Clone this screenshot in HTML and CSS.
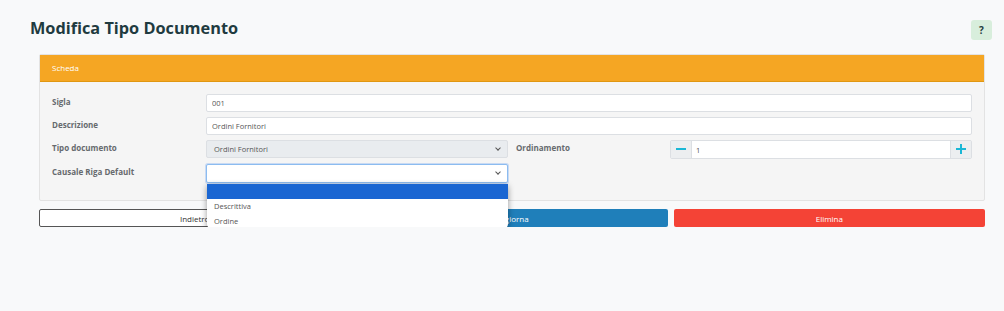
FILE: index.html
```html
<!DOCTYPE html>
<html lang="it">
<head>
  <meta charset="UTF-8">
  <title>Modifica Tipo Documento</title>
  <link rel="stylesheet" href="styles.css">
</head>
<body>
  <!-- Page header -->
  <div class="page-head">
    <h1>Modifica Tipo Documento</h1>
    <button class="help-btn">?</button>
  </div>

  <!-- Card -->
  <div class="card">
    <div class="card-header">Scheda</div>
    <div class="card-body">
      <div class="form-grid">
        <label class="lbl">Sigla</label>
        <div class="field wide"><input class="ctrl" type="text" value="001"></div>

        <label class="lbl">Descrizione</label>
        <div class="field wide"><input class="ctrl" type="text" value="Ordini Fornitori"></div>

        <label class="lbl">Tipo documento</label>
        <div class="field">
          <div class="ctrl select disabled">Ordini Fornitori<span class="chev"></span></div>
        </div>
        <span></span>
        <label class="lbl">Ordinamento</label>
        <div class="field">
          <div class="spinner">
            <span class="spin-btn minus"></span>
            <input class="spin-input" type="text" value="1">
            <span class="spin-btn plus"></span>
          </div>
        </div>

        <label class="lbl">Causale Riga Default</label>
        <div class="field">
          <div class="ctrl select focused"><span class="chev"></span></div>
          <!-- open native list -->
          <ul class="dropdown">
            <li class="active">&nbsp;</li>
            <li>Descrittiva</li>
            <li>Ordine</li>
          </ul>
        </div>
      </div>
    </div>
  </div>

  <div class="actions">
    <button class="btn btn-back">Indietro</button>
    <button class="btn btn-save">Aggiorna</button>
    <button class="btn btn-del">Elimina</button>
  </div>
</body>
</html>
```

FILE: styles.css
```css
body {
  margin: 0;
  padding: 0;
  background: #f8f9fa;
  font-family: 'Open Sans', 'Liberation Sans', sans-serif;
  color: #555;
}

.page-head {
  display: flex;
  justify-content: space-between;
  align-items: flex-start;
  padding: 15px 12px 0 30px;
  height: 39px;
}

.page-head h1 {
  margin: 0;
  font-size: 16.3px;
  font-weight: 700;
  color: #1f3b40;
  line-height: 26px;
}

.help-btn {
  width: 21px;
  height: 20px;
  margin-top: 5px;
  border: none;
  border-radius: 3px;
  background: #d8eedc;
  color: #1f3b40;
  font-family: inherit;
  font-weight: 700;
  font-size: 10px;
  padding: 0;
}

.card {
  margin: 0 19px 0 39px;
  border: 1px solid #e3e3e3;
  border-radius: 2px;
  background: #f5f5f5;
}

.card-header {
  background: #f5a623;
  color: #fff;
  font-size: 8px;
  height: 27px;
  line-height: 26px;
  padding-left: 12px;
  border-bottom: 1px solid #e09712;
  box-sizing: border-box;
}

.card-body {
  padding: 12px 12px 17px 12px;
}

.form-grid {
  display: grid;
  grid-template-columns: 154px 1fr 8px 154px 1fr;
  row-gap: 5px;
}

.lbl {
  font-size: 8px;
  font-weight: 700;
  color: #666a6e;
  padding-top: 2px;
}

.field {
  position: relative;
}

.field.wide {
  grid-column: 2 / -1;
}

.ctrl {
  display: block;
  width: 100%;
  height: 18px;
  box-sizing: border-box;
  border: 1px solid #dcdfe3;
  border-radius: 2px;
  background: #fff;
  padding: 0 5px;
  font-family: inherit;
  font-size: 7.5px;
  color: #555;
  line-height: 16px;
}

.select {
  position: relative;
}

.select.disabled {
  background: #e9ecef;
  padding-left: 7px;
}

.select.focused {
  height: 19px;
  border-color: #8cbcf0;
  box-shadow: 0 0 0 1px rgba(120, 170, 240, 0.35);
}

.chev {
  position: absolute;
  right: 7px;
  top: 5px;
  width: 3px;
  height: 3px;
  border-right: 1.2px solid #555;
  border-bottom: 1.2px solid #555;
  transform: rotate(45deg);
}

.spinner {
  display: flex;
  height: 19px;
  border: 1px solid #dcdfe3;
  border-radius: 2px;
  box-sizing: border-box;
  background: #fff;
}

.spin-btn {
  width: 20px;
  background: #eceef0;
  position: relative;
}

.minus {
  border-right: 1px solid #dcdfe3;
}

.plus {
  border-left: 1px solid #dcdfe3;
}

.spin-btn::before,
.plus::after {
  content: "";
  position: absolute;
  left: 5px;
  top: 7px;
  width: 10px;
  height: 2px;
  background: #1ab7d6;
}

.plus::after {
  left: 9px;
  top: 3px;
  width: 2px;
  height: 10px;
}

.spin-input {
  flex: 1;
  border: none;
  padding: 0 4px;
  font-family: inherit;
  font-size: 7.5px;
  color: #555;
  outline: none;
  min-width: 0;
}

.dropdown {
  position: absolute;
  left: 1px;
  right: 0;
  top: 20px;
  margin: 0;
  padding: 0;
  list-style: none;
  background: #fff;
  border-radius: 0 0 5px 5px;
  box-shadow: 0 2px 6px rgba(0, 0, 0, 0.4);
  z-index: 10;
}

.dropdown li {
  font-size: 7.5px;
  line-height: 15px;
  padding-left: 7px;
  color: #555;
}

.dropdown li.active {
  background: #1a66d2;
  line-height: 15px;
}

.actions {
  display: grid;
  grid-template-columns: 1fr 1fr 1fr;
  gap: 6px;
  margin: 8px 19px 0 39px;
}

.btn {
  height: 18px;
  border-radius: 2px;
  font-family: inherit;
  font-size: 8px;
  padding: 0;
  border: 1px solid transparent;
}

.btn-back {
  background: #fff;
  border-color: #555;
  color: #333;
}

.btn-save {
  background: #1f7fba;
  color: #fff;
}

.btn-del {
  background: #f44336;
  color: #fff;
}
```
